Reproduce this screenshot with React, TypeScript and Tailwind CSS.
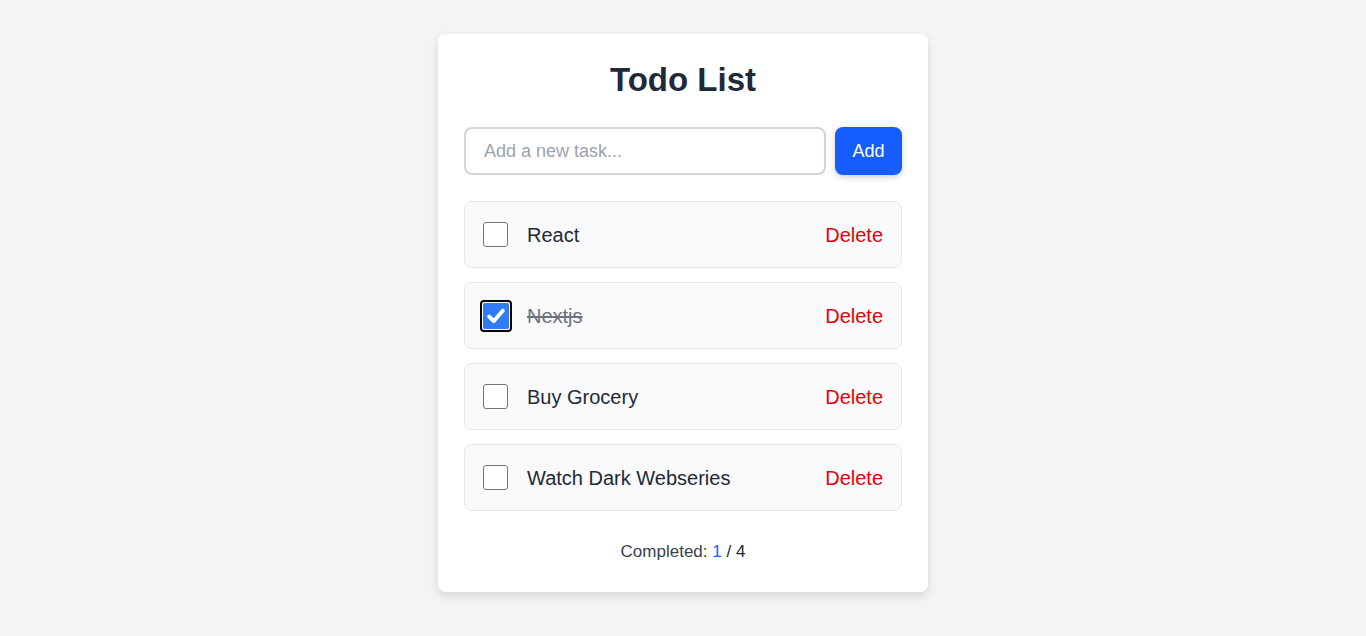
import React, { useState } from "react";

interface Todo {
  id: number;
  text: string;
  done: boolean;
}

const initialTodos: Todo[] = [
  { id: 1, text: "React", done: false },
  { id: 2, text: "Nextjs", done: true },
  { id: 3, text: "Buy Grocery", done: false },
  { id: 4, text: "Watch Dark Webseries", done: false },
];

const CheckBox = ({ checked, onClick }: { checked: boolean; onClick: () => void }) =>
  checked ? (
    <button
      onClick={onClick}
      className="w-[32px] h-[32px] -mx-[3.5px] rounded-[4px] border-2 border-black bg-white flex items-center justify-center shrink-0"
    >
      <span className="w-[26px] h-[26px] rounded-[2px] bg-[#2f7cf6] flex items-center justify-center">
        <svg width="22" height="22" viewBox="0 0 20 20" fill="none">
          <path
            d="M3.8 10.6 L8 14.6 L16.2 5.2"
            stroke="white"
            strokeWidth="3.6"
            strokeLinecap="round"
            strokeLinejoin="round"
          />
        </svg>
      </span>
    </button>
  ) : (
    <button
      onClick={onClick}
      className="w-[25px] h-[25px] rounded-[3px] border border-[#767676] bg-white shrink-0"
    />
  );

export default function App() {
  const [todos, setTodos] = useState<Todo[]>(initialTodos);
  const [input, setInput] = useState("");

  const addTodo = () => {
    if (!input.trim()) return;
    setTodos([...todos, { id: Date.now(), text: input.trim(), done: false }]);
    setInput("");
  };

  const toggle = (id: number) =>
    setTodos(todos.map((t) => (t.id === id ? { ...t, done: !t.done } : t)));

  const remove = (id: number) => setTodos(todos.filter((t) => t.id !== id));

  const completed = todos.filter((t) => t.done).length;

  return (
    <div
      className="min-h-screen bg-[#f3f4f6] pt-[34px]"
      style={{ fontFamily: '"Liberation Sans", Arial, sans-serif' }}
    >
      <div className="mx-auto w-[490px] bg-white rounded-lg shadow-[0_4px_10px_rgba(0,0,0,0.12)] px-[26px] pt-[27px] pb-[28px]">
        <h1 className="text-center text-[33px] leading-[38px] font-bold text-[#1f2937]">
          Todo List
        </h1>

        {/* input row */}
        <div className="flex gap-[9px] mt-[28px]">
          <input
            value={input}
            onChange={(e) => setInput(e.target.value)}
            placeholder="Add a new task..."
            className="flex-1 h-[48px] px-[18px] rounded-lg border-2 border-[#d1d5db] text-[18px] text-[#1f2937] placeholder:text-[#9ca3af] outline-none"
          />
          <button
            onClick={addTodo}
            className="w-[67px] h-[48px] rounded-lg bg-[#155dfc] text-white text-[18px] shadow-[0_2px_6px_rgba(0,0,0,0.2)]"
          >
            Add
          </button>
        </div>

        {/* list */}
        <div className="flex flex-col gap-[14px] mt-[26px]">
          {todos.map((todo) => (
            <div
              key={todo.id}
              className="h-[67px] flex items-center pl-[18px] pr-[18px] rounded-lg border border-[#e5e7eb] bg-[#f9fafb]"
            >
              <CheckBox checked={todo.done} onClick={() => toggle(todo.id)} />
              <span
                className={`ml-[19px] flex-1 text-[20px] ${
                  todo.done ? "line-through text-[#6b7280]" : "text-[#1f2937]"
                }`}
              >
                {todo.text}
              </span>
              <button
                onClick={() => remove(todo.id)}
                className="text-[20px] text-[#e7000b]"
              >
                Delete
              </button>
            </div>
          ))}
        </div>

        <p className="mt-[29px] text-center text-[17px] leading-[24px] text-[#374151]">
          Completed: <span className="text-[#155dfc]">{completed}</span>{" "}
          <span className="text-[#1f2937]">/ {todos.length}</span>
        </p>
      </div>
    </div>
  );
}
